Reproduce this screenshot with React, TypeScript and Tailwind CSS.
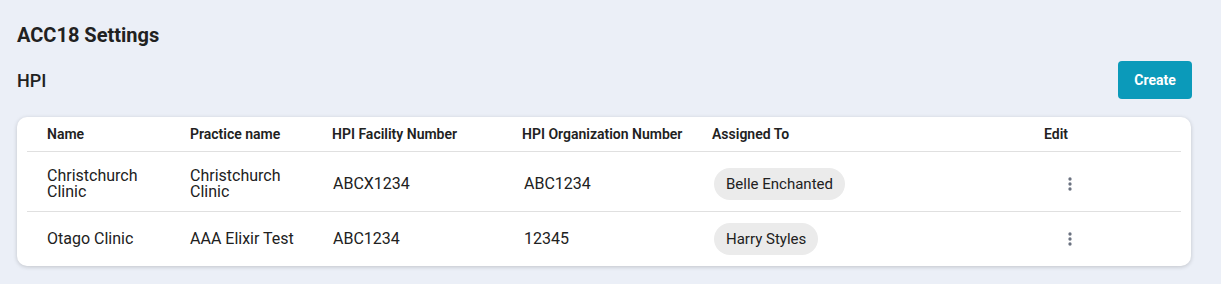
const rows = [
  {
    name: "Christchurch Clinic",
    practice: "Christchurch Clinic",
    facility: "ABCX1234",
    org: "ABC1234",
    assigned: "Belle Enchanted",
  },
  {
    name: "Otago Clinic",
    practice: "AAA Elixir Test",
    facility: "ABC1234",
    org: "12345",
    assigned: "Harry Styles",
  },
];

const cols = "grid grid-cols-[143px_142px_190px_190px_332px_1fr]";

function Kebab() {
  return (
    <svg width="20" height="20" viewBox="0 0 24 24" className="fill-[#6b7280]">
      <circle cx="12" cy="6" r="2" />
      <circle cx="12" cy="12" r="2" />
      <circle cx="12" cy="18" r="2" />
    </svg>
  );
}

export default function App() {
  return (
    <div className="min-h-[284px] bg-[#ebeff7] px-[17px] pt-[22px] font-['Roboto',sans-serif] text-[#212121]">
      <h1 className="text-[20px] font-bold leading-[26px]">ACC18 Settings</h1>
      <div className="mt-[13px] flex items-center justify-between pr-[12px]">
        <h2 className="text-[18px] font-medium">HPI</h2>
        <button className="h-[38px] w-[74px] rounded-[4px] bg-[#0b9aba] text-[14px] font-bold text-white">
          Create
        </button>
      </div>
      <div className="mt-[18px] w-[1174px] rounded-[10px] bg-white px-[10px] shadow-[0_1px_4px_rgba(0,0,0,0.18)]">
        <div className={`${cols} h-[35px] items-center border-b border-[#e0e0e0] text-[14px] font-semibold`}>
          <div className="pl-[20px]">Name</div>
          <div className="pl-[20px]">Practice name</div>
          <div className="pl-[20px]">HPI Facility Number</div>
          <div className="pl-[20px]">HPI Organization Number</div>
          <div className="pl-[20px]">Assigned To</div>
          <div className="pl-[20px]">Edit</div>
        </div>
        {rows.map((r, i) => (
          <div
            key={r.name}
            className={`${cols} items-center text-[16px] leading-[16px] ${
              i === 0 ? "border-b border-[#e0e0e0] pt-[16px] pb-[11px]" : "py-[11px]"
            }`}
          >
            <div className="pl-[20px] pr-[10px]">{r.name}</div>
            <div className="pl-[20px] pr-[10px]">{r.practice}</div>
            <div className="pl-[21px]">{r.facility}</div>
            <div className="pl-[22px]">{r.org}</div>
            <div className="pl-[22px]">
              <span className="inline-flex h-[32px] items-center rounded-full bg-[#ebebeb] px-[12px] text-[15px]">
                {r.assigned}
              </span>
            </div>
            <div className="pl-[36px]">
              <Kebab />
            </div>
          </div>
        ))}
      </div>
    </div>
  );
}
